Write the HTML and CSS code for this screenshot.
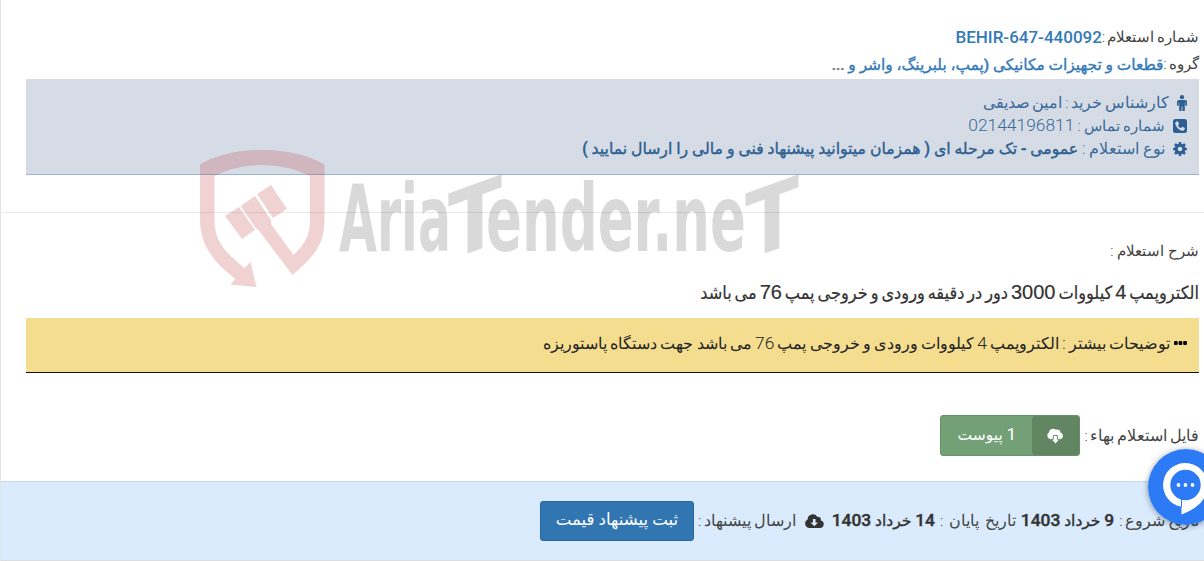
FILE: index.html
```html
<!DOCTYPE html>
<html lang="fa" dir="rtl">

<head>
  <meta charset="UTF-8">
  <meta name="viewport" content="width=device-width, initial-scale=1.0">
  <title>AriaTender</title>
  <link rel="stylesheet" href="styles.css">
</head>

<body>
  <div class="panel">
    <div class="content">
      <div class="line line-number"><span class="t-label">شماره استعلام :</span><b class="link code">BEHIR-647-440092</b></div>
      <div class="line line-group"><span class="t-label">گروه :</span><b class="link group">قطعات و تجهیزات مکانیکی (پمپ، بلبرینگ، واشر و </b><b class="dots">...</b></div>

      <div class="info">
        <div class="info-row">
          <svg class="ico ico-man" viewBox="0 0 10 16"><circle cx="5" cy="2.2" r="2.1" /><path d="M2 5h6q2 0 2 2v3.8H8.300V7.600h-.5V16H5.400v-4.600h-.8V16H2.200V7.600h-.5v3.200H0V7q0-2 2-2z" /></svg>
          <span class="t-buyer">کارشناس خرید : امین صدیقی</span>
        </div>
        <div class="info-row">
          <svg class="ico" viewBox="0 0 14 14"><path fill-rule="evenodd" d="M2.500 0h9A2.500 2.500 0 0 1 14 2.500v9a2.500 2.500 0 0 1-2.500 2.500h-9A2.500 2.500 0 0 1 0 11.500v-9A2.500 2.500 0 0 1 2.500 0zM4.200 2.200C2.800 2.700 2 3.600 2.300 5c.8 3.300 3.400 5.900 6.600 6.700 1.500.2 2.500-.6 2.900-2v-.6L9.300 7.800l-1.400 1.300C6.500 8.500 5.500 7.500 4.900 6.200l1.200-1.300L4.800 2.200z" /></svg>
          <span class="t-phone">شماره تماس : <span class="num">02144196811</span></span>
        </div>
        <div class="info-row">
          <svg class="ico" viewBox="0 0 14 14"><path fill-rule="evenodd" d="M5.900 0h2.200l.4 1.900 1.100.4L11.200 1.200l1.600 1.600-1.100 1.600.4 1.100 1.900.4v2.200l-1.900.4-.4 1.100 1.100 1.600-1.600 1.600-1.600-1.100-1.100.4L8.100 14H5.900l-.4-1.900-1.100-.4-1.600 1.100-1.600-1.600 1.100-1.600-.4-1.100L0 8.100V5.900l1.900-.4.4-1.100L1.200 2.800l1.600-1.600 1.600 1.100 1.100-.4zM7 4.700a2.300 2.300 0 1 0 0 4.600 2.300 2.300 0 0 0 0-4.600z" /></svg>
          <span class="t-type">نوع استعلام : <b class="t-mode">عمومی - تک مرحله ای ( همزمان میتوانید پیشنهاد فنی و مالی را ارسال نمایید )</b></span>
        </div>
      </div>
    </div>

    <div class="divider"></div>

    <div class="content">
      <div class="line line-desc"><span class="t-desc">شرح استعلام :</span></div>
      <h4 class="title">الکتروپمپ <span class="title-num">4</span> کیلووات <span class="title-num">3000</span> دور در دقیقه ورودی و خروجی پمپ <span class="title-num">76</span> می باشد</h4>
      <div class="more">
        <svg class="ico-dots" viewBox="0 0 13 4"><rect width="3.700" height="4" rx="1" /><rect x="4.600" width="3.700" height="4" rx="1" /><rect x="9.200" width="3.700" height="4" rx="1" /></svg>
        <span class="t-more">توضیحات بیشتر : الکتروپمپ <span class="num">4</span> کیلووات ورودی و خروجی پمپ <span class="num">76</span> می باشد جهت دستگاه پاستوریزه</span>
      </div>
      <div class="files">
        <span class="t-files">فایل استعلام بهاء :</span>
        <div class="btn-attach">
          <span class="btn-ico"><svg viewBox="0 0 18 16"><path fill="#fff" d="M4 11.500A4 4 0 0 1 2 4.300 4.500 4.500 0 0 1 9.500 1.500a3.300 3.300 0 0 1 4.800 2.800 3.800 3.800 0 0 1 0 7.200h-1.300L9 16l-4-4.500z" /><path fill="none" stroke="#628562" d="M4 11.500h2.700V7.500H11v4h3" /></svg></span>
          <span class="btn-text"><span class="num">1</span> پیوست</span>
        </div>
      </div>
    </div>

    <div class="footer">
      <span class="t-start">تاریخ شروع :</span>
      <b class="t-date"><span class="num">9</span> خرداد <span class="num">1403</span></b>
      <span class="t-end">تاریخ پایان :</span>
      <b class="t-date"><span class="num">14</span> خرداد <span class="num">1403</span></b>
      <svg class="ico-cloud" viewBox="0 0 19 14"><path fill-rule="evenodd" d="M4.500 14A4.500 4.500 0 0 1 2.600 5.500 5.200 5.200 0 0 1 12.200 2.800a3 3 0 0 1 3.600 3.700A3.800 3.800 0 0 1 15 14zM8 5v3.500H5.500L9.300 12.300l3.700-3.800h-2.500V5z" /></svg>
      <span class="t-send">ارسال پیشنهاد :</span>
      <a class="btn-send">ثبت پیشنهاد قیمت</a>
    </div>
  </div>

  <!-- watermark -->
  <svg class="watermark" viewBox="0 0 602 142" direction="ltr">
    <g class="wm-red">
      <path d="M0 16.500Q25 2 62 2t62.500 14.500V71c0 28-12 38-32 56L58 81.500l-2-1L40.500 58 55 48l16 24v4l22.500 31C106 95 110 86 110 71V28Q88 17 62 17T14.500 28v43c0 22 9 32 30 49l6-6 6 25-26-2.500 5-5.500C12 113 0 96 0 71z" />
      <path d="M57 46 71 37 87 61 73 70zM25 68 39 59 55 82 42 91z" />
    </g>
    <g class="wm-grey">
      <text x="139" y="103" textLength="112" lengthAdjust="spacingAndGlyphs">Aria</text>
      <text x="-27" y="0" textLength="54" lengthAdjust="spacingAndGlyphs" transform="translate(275 103) skewY(-20)">T</text>
      <text x="286" y="103" textLength="260" lengthAdjust="spacingAndGlyphs">ender.ne</text>
      <text x="-27" y="0" textLength="54" lengthAdjust="spacingAndGlyphs" transform="translate(572 103) skewY(-20)">T</text>
    </g>
  </svg>

  <div class="chat">
    <svg viewBox="0 0 76 76"><circle cx="38" cy="38" r="38" fill="#2d7af6" /><path fill="#fff" fill-rule="evenodd" d="M37.500 14a22 22 0 0 1 22 22c0 15-11 24-26 29.500V57.700A22 22 0 0 1 37.500 14zm0 6.800a15.200 15.200 0 1 0 0 30.400 15.200 15.200 0 0 0 0-30.400z" /><path d="M33.500 50v8" stroke="#2d7af6" /><g fill="#fff"><circle cx="30.500" cy="36" r="1.900" /><circle cx="37.500" cy="36" r="1.900" /><circle cx="44.500" cy="36" r="1.900" /></g></svg>
  </div>
</body>

</html>
```
FILE: styles.css
```css
* {
  box-sizing: border-box;
}

html,
body {
  margin: 0;
  height: 100%;
  overflow: hidden;
  background: #fff;
}

body {
  font-family: Roboto, "DejaVu Sans", sans-serif;
  font-size: 15.5px;
  font-weight: 300;
  color: #444;
  white-space: nowrap;
}

b {
  font-weight: 500;
  -webkit-text-stroke: .4px currentColor;
}

.num {
  font-size: 17.4px;
  line-height: 1;
}

.panel {
  height: 561px;
  border-left: 1px solid #e0e5ec;
}

.content {
  padding: 0 5px 0 25px;
}

.line {
  display: flex;
  align-items: center;
  white-space: pre;
}

.line-number {
  height: 50px;
  padding-top: 24px;
}

.line-group {
  height: 29px;
}

.t-label {
  font-size: 14.5px;
  word-spacing: -1px;
}

.link {
  color: #337ab7;
}

.code {
  font-size: 17px;
  -webkit-text-stroke: 0;
}

.group {
  font-size: 15.4px;
}

.dots {
  color: #777;
}

.info {
  height: 96px;
  padding: 12px 12px 0;
  background: #d6dce5;
  border-bottom: 1px solid #9bb3cc;
  color: #3a6a9b;
}

.info-row {
  display: flex;
  align-items: center;
  height: 23px;
  gap: 8px;
}

.info b {
  color: #2d5f92;
}

.ico {
  width: 14px;
  height: 14px;
  fill: #2d5f92;
}

.ico-man {
  width: 10px;
  height: 16px;
}

.t-buyer {
  word-spacing: -1px;
}

.t-phone {
  font-size: 15px;
  word-spacing: -.5px;
}

.t-type {
  font-size: 15.7px;
}

.divider {
  height: 38px;
  border-bottom: 1px solid #e8e8e8;
}

.line-desc {
  height: 76px;
}

.t-desc {
  font-size: 15.3px;
}

.title {
  margin: 0;
  height: 29px;
  line-height: 6px;
  font-family: "Liberation Sans", "DejaVu Sans Condensed", "DejaVu Sans", sans-serif;
  font-size: 18px;
  font-weight: 400;
  color: #333;
  word-spacing: -2.1px;
  -webkit-text-stroke: .2px #333;
}

.title-num {
  font-size: 20px;
  letter-spacing: -1.2px;
}

.more {
  display: flex;
  align-items: center;
  gap: 4px;
  height: 55px;
  padding: 0 12px 4px;
  background: #f5dd90;
  border-bottom: 1px solid #111;
  color: #222;
}

.t-more {
  font-size: 15.7px;
  word-spacing: -.65px;
}

.ico-dots {
  width: 13px;
  height: 4px;
}

.files {
  display: flex;
  align-items: center;
  gap: 4px;
  height: 108px;
  padding-top: 17px;
}

.t-files {
  word-spacing: -1px;
}

.btn-attach {
  display: flex;
  width: 140px;
  height: 41px;
  border: 1px solid #659368;
  border-radius: 3px;
  background: #73a077;
  color: #fff;
  font-weight: 400;
}

.btn-ico {
  display: flex;
  align-items: center;
  justify-content: center;
  width: 47px;
  border-radius: 3px;
  background: #628562;
}

.btn-ico svg {
  width: 17px;
  height: 16px;
}

.btn-text {
  flex: 1;
  text-align: center;
  line-height: 38px;
}

.footer {
  display: flex;
  align-items: center;
  gap: 5px;
  height: 80px;
  padding-right: 5px;
  background: #d9ebfd;
  border-top: 1px solid #c5d9ec;
  border-bottom: 1px solid #ddd;
}

.t-start {
  word-spacing: -1px;
}

.t-end {
  word-spacing: 2px;
}

.t-date {
  color: #333;
}

.ico-cloud {
  width: 19px;
  height: 14px;
  margin-right: 3px;
  margin-left: 4px;
  fill: #333;
}

.t-send {
  word-spacing: -1px;
}

.btn-send {
  width: 154px;
  height: 40px;
  margin-right: -1px;
  border: 1px solid #2a659b;
  border-radius: 3px;
  background: #3276b1;
  color: #fff;
  font-size: 16.6px;
  font-weight: 400;
  line-height: 36px;
  text-align: center;
}

/* overlays */
.watermark {
  position: absolute;
  left: 200px;
  top: 148px;
  width: 602px;
  height: 142px;
  overflow: visible;
}

.wm-red {
  fill: rgba(184, 28, 36, .2);
}

.wm-grey {
  fill: rgba(0, 0, 0, .15);
  font: 700 92px "DejaVu Sans", sans-serif;
}

.chat {
  position: absolute;
  left: 1148px;
  top: 449px;
  width: 76px;
  height: 76px;
  border-radius: 50%;
  box-shadow: 0 1px 6px rgba(0, 0, 0, .4);
}
```
